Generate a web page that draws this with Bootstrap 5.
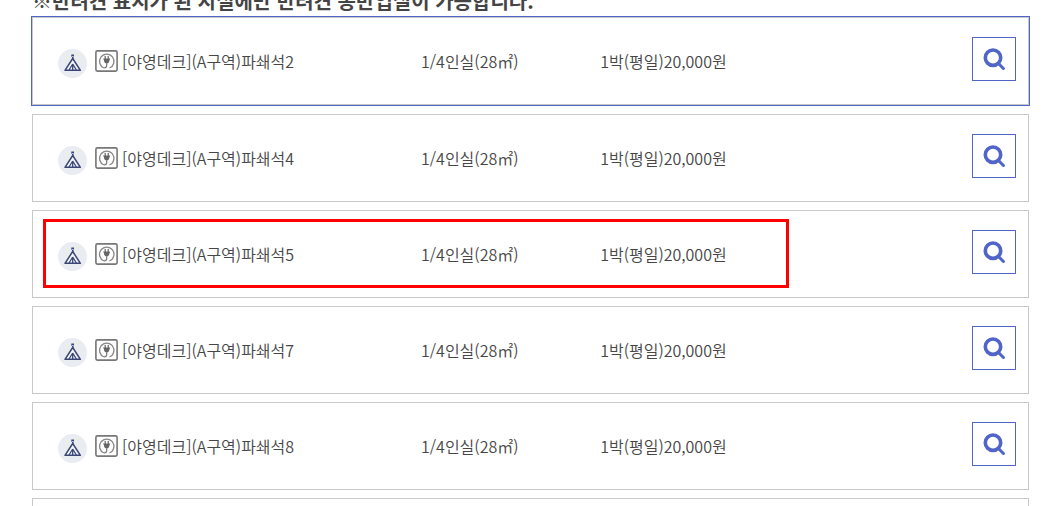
<!DOCTYPE html>
<html lang="ko">
<head>
<meta charset="utf-8">
<meta name="viewport" content="width=device-width, initial-scale=1">
<title>야영데크 시설 목록</title>
<link href="https://cdn.jsdelivr.net/npm/bootstrap@5.3.0/dist/css/bootstrap.min.css" rel="stylesheet">
<style>
  body { font-family: "Noto Sans CJK KR", sans-serif; color: #464646; background: #fff; }
  .facility-page { height: 100vh; overflow: hidden; padding: 0 30px 0 32px; }
  .pet-notice { font-size: 20px; line-height: 32px; font-weight: 700; color: #444; margin: -15px 0 0; }
  .facility-card { height: 88px; border: 1px solid #c8c8c8; margin-bottom: 8px; }
  .facility-card.selected { outline: 1px solid #5165c8; margin-bottom: 9px; }
  .facility-info { font-size: 16px; line-height: 24px; font-weight: 350; white-space: nowrap; }
  .facility-name { width: 39%; padding-left: 25px; }
  .facility-size { width: 18%; }
  .tent-icon { margin-top: 5px; margin-right: 8px; }
  .plug-icon { margin-right: 4px; }
  .btn-search { width: 44px; height: 44px; border: 1px solid #5165c8; border-radius: 0; background: #fff; margin: 0 12px 4px 0; }
  .btn-search:hover { background: #eef0fa; border-color: #5165c8; }
  .highlight-box { top: 8px; bottom: 9px; left: 10px; width: 75%; border: 3px solid #f00; pointer-events: none; }
</style>
</head>
<body>
<svg class="d-none" aria-hidden="true">
  <symbol id="tent" viewBox="0 0 29 29">
    <circle cx="14.5" cy="14.5" r="14.500" fill="#e9edf2"/>
    <g fill="#f3edb4"><circle cx="10" cy="8" r=".8"/><circle cx="19" cy="5.500" r=".9"/><circle cx="21" cy="11" r=".7"/><circle cx="8" cy="13" r=".7"/></g>
    <path d="M13.300 5.500h2.700v2.200h-2.700zM14 7v4h1.500V7z" fill="#3b4676"/>
    <path d="M14.700 9.500 7 21.300h15.400z" fill="#f4f6fa" stroke="#3b4676" stroke-width="1.500" stroke-linejoin="round"/>
    <path d="M14.700 15 11 21M14.700 15l3.700 6M14.700 16v5" fill="none" stroke="#3b4676" stroke-width="1.300"/>
  </symbol>
  <symbol id="plug" viewBox="0 0 23 22">
    <rect x=".9" y=".9" width="21.200" height="20.200" rx="1.500" fill="#fff" stroke="#777" stroke-width="1.600"/>
    <path d="M9 18A7.200 7.200 0 1 1 14.500 18" fill="none" stroke="#888" stroke-width="1.300"/>
    <path d="M10.200 6v3M13.200 6v3" stroke="#666" stroke-width="1.200"/>
    <path d="M8.400 8.500H15v1.200h-.5c0 2-.8 3.200-2 3.600h-1.600c-1.200-.4-2-1.600-2-3.600h-.5z" fill="#666"/>
    <path d="M11.700 13v2.300c0 1.700-.9 2.700-2.700 2.700" fill="none" stroke="#777" stroke-width="1.200"/>
  </symbol>
  <symbol id="search" viewBox="0 0 22 22">
    <circle cx="10" cy="9.700" r="7.700" fill="none" stroke="#5165c8" stroke-width="3.600"/>
    <path d="m16 16 4.400 4.500" stroke="#5165c8" stroke-width="3" stroke-linecap="round"/>
  </symbol>
</svg>
<main class="facility-page">
  <p class="pet-notice text-nowrap">※반려견 표시가 된 시설에만 반려견 동반입실이 가능합니다.</p>
  <ul class="list-unstyled mb-0" id="facility-list"></ul>
</main>
<script>
  const facilities = [2, 4, 5, 7, 8, 9];
  document.getElementById('facility-list').innerHTML = facilities.map((n, i) => `
    <li class="facility-card position-relative d-flex align-items-center${i === 0 ? ' selected' : ''}">
      <div class="facility-info d-flex align-items-center flex-grow-1">
        <div class="facility-name d-flex align-items-center flex-shrink-0">
          <svg class="tent-icon flex-shrink-0" width="29" height="29" role="img" aria-label="야영"><use href="#tent"/></svg>
          <svg class="plug-icon flex-shrink-0" width="23" height="22" role="img" aria-label="전기"><use href="#plug"/></svg>
          <span>[야영데크](A구역)파쇄석${n}</span>
        </div>
        <span class="facility-size flex-shrink-0">1/4인실(28㎡)</span>
        <span>1박(평일)20,000원</span>
      </div>
      <button type="button" class="btn btn-search position-absolute end-0 p-0 d-flex align-items-center justify-content-center" aria-label="파쇄석${n} 상세보기">
        <svg width="22" height="22" aria-hidden="true"><use href="#search"/></svg>
      </button>
      ${n === 5 ? '<div class="highlight-box position-absolute"></div>' : ''}
    </li>`).join('');
</script>
<script src="https://cdn.jsdelivr.net/npm/bootstrap@5.3.0/dist/js/bootstrap.bundle.min.js"></script>
</body>
</html>
